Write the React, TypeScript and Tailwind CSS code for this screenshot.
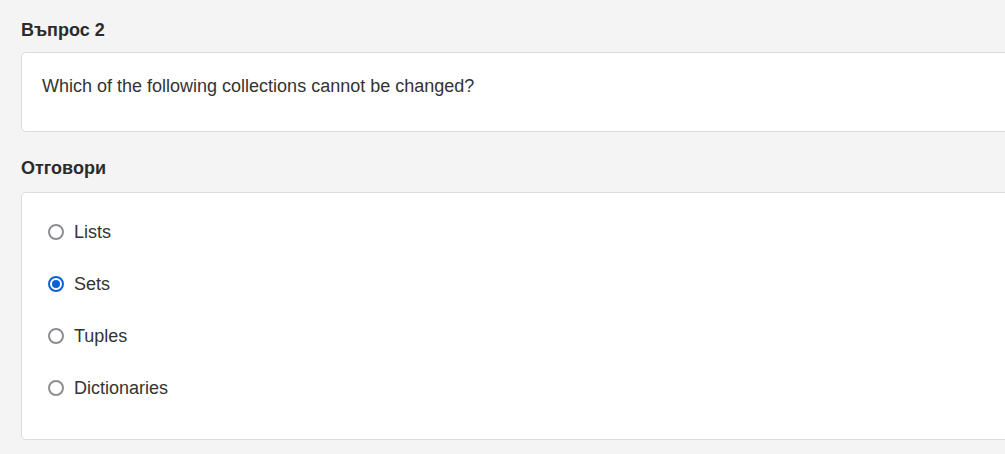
import { useState } from 'react'

const options = ['Lists', 'Sets', 'Tuples', 'Dictionaries']

function Radio({ checked }: { checked: boolean }) {
  return (
    <span
      className={`flex h-[16px] w-[16px] shrink-0 items-center justify-center rounded-full border-2 bg-white ${checked ? 'border-[#0b62d6]' : 'border-[#8f8f93]'}`}
    >
      {checked && <span className="h-[8px] w-[8px] rounded-full bg-[#0b62d6]" />}
    </span>
  )
}

export default function App() {
  const [picked, setPicked] = useState('Sets')

  return (
    <div className="min-h-screen w-full overflow-hidden bg-[#f4f4f4] pl-[21px] pt-[19px] text-[#333] font-['Liberation_Sans',Arial,sans-serif]">
      <div className="w-[1020px]">
        <h3 className="text-[18px] font-bold leading-[22px] text-[#2b2b2b]">Въпрос 2</h3>
        <div className="mt-[11px] h-[80px] rounded-[5px] border border-[#dcdcdc] bg-white px-[20px] pt-[22px]">
          <p className="text-[18px] leading-[22px]">Which of the following collections cannot be changed?</p>
        </div>

        <h3 className="mt-[25px] text-[18px] font-bold leading-[22px] text-[#2b2b2b]">Отговори</h3>
        <div className="mt-[13px] h-[248px] rounded-[5px] border border-[#dcdcdc] bg-white pl-[26px] pt-[28px]">
          <div className="flex flex-col gap-[30px]">
            {options.map(o => (
              <label key={o} onClick={() => setPicked(o)} className="flex h-[22px] cursor-pointer items-center gap-[10px] text-[18px]">
                <Radio checked={picked === o} />
                <span>{o}</span>
              </label>
            ))}
          </div>
        </div>
      </div>
    </div>
  )
}
